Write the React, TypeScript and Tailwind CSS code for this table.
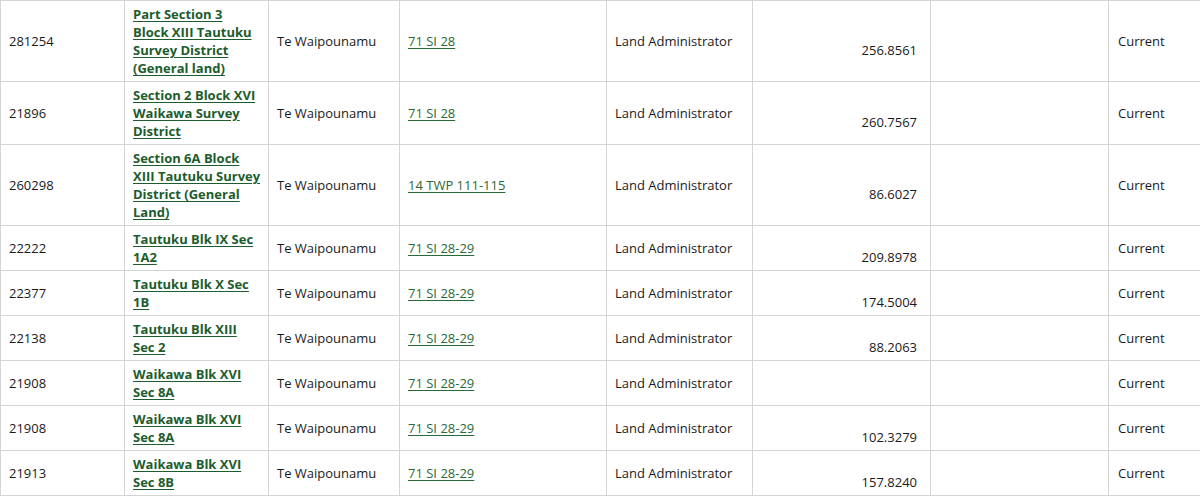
const rows = [
  { id: '281254', title: ['Part Section 3', 'Block XIII Tautuku', 'Survey District', '(General land)'], ref: '71 SI 28', area: '256.8561' },
  { id: '21896', title: ['Section 2 Block XVI', 'Waikawa Survey', 'District'], ref: '71 SI 28', area: '260.7567' },
  { id: '260298', title: ['Section 6A Block', 'XIII Tautuku Survey', 'District (General', 'Land)'], ref: '14 TWP 111-115', area: '86.6027' },
  { id: '22222', title: ['Tautuku Blk IX Sec', '1A2'], ref: '71 SI 28-29', area: '209.8978' },
  { id: '22377', title: ['Tautuku Blk X Sec', '1B'], ref: '71 SI 28-29', area: '174.5004' },
  { id: '22138', title: ['Tautuku Blk XIII', 'Sec 2'], ref: '71 SI 28-29', area: '88.2063' },
  { id: '21908', title: ['Waikawa Blk XVI', 'Sec 8A'], ref: '71 SI 28-29', area: '' },
  { id: '21908', title: ['Waikawa Blk XVI', 'Sec 8A'], ref: '71 SI 28-29', area: '102.3279' },
  { id: '21913', title: ['Waikawa Blk XVI', 'Sec 8B'], ref: '71 SI 28-29', area: '157.8240' },
];

const cell = 'border border-[#d4d4d4] px-[8px] py-[4px] align-middle';

export default function App() {
  return (
    <div className="w-[1200px] h-[496px] overflow-hidden bg-white font-['Open_Sans',sans-serif] text-[13px] leading-[18px] text-[#1a1a1a]">
      <table className="w-[1200px] table-fixed border-collapse">
        <colgroup>
          <col className="w-[124px]" />
          <col className="w-[144px]" />
          <col className="w-[131px]" />
          <col className="w-[207px]" />
          <col className="w-[146px]" />
          <col className="w-[178px]" />
          <col className="w-[178px]" />
          <col className="w-[92px]" />
        </colgroup>
        <tbody>
          {rows.map((r, i) => (
            <tr key={i}>
              <td className={cell}>{r.id}</td>
              <td className={`${cell} pr-[2px] whitespace-nowrap`}>
                <a href="#" className="font-bold text-[#1d5c2c] underline underline-offset-2">
                  {r.title.map((line, j) => (
                    <span key={j}>
                      {j > 0 && <br />}
                      {line}
                    </span>
                  ))}
                </a>
              </td>
              <td className={cell}>Te Waipounamu</td>
              <td className={cell}>
                <a href="#" className="text-[#2a6a38] underline underline-offset-2">
                  {r.ref}
                </a>
              </td>
              <td className={cell}>Land Administrator</td>
              <td className={`${cell} text-right pr-[13px]`}>
                {r.area && <div className="pt-[18px]">{r.area}</div>}
              </td>
              <td className={cell}></td>
              <td className={`${cell} pl-[9px]`}>Current</td>
            </tr>
          ))}
        </tbody>
      </table>
    </div>
  );
}
